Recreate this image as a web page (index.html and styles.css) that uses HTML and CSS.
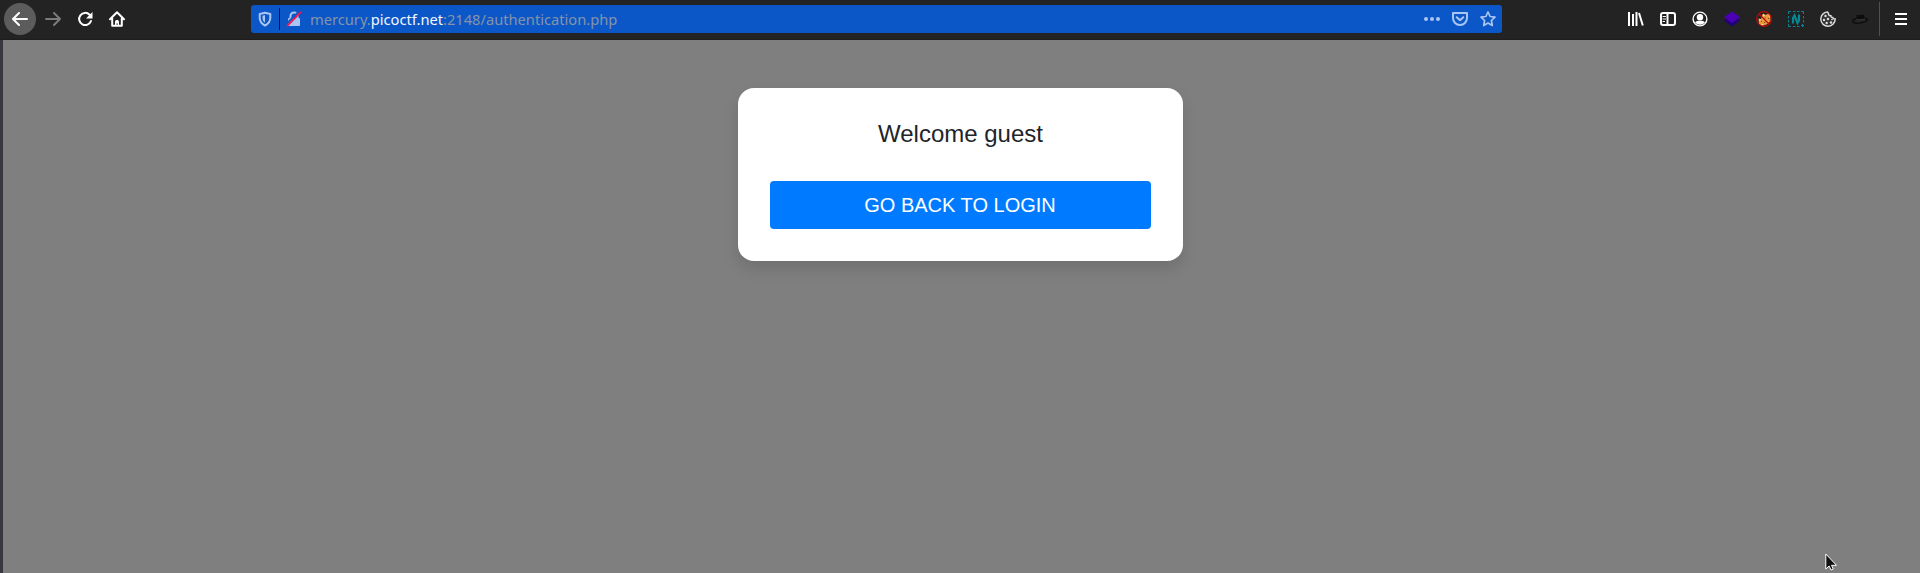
FILE: index.html
```html
<!DOCTYPE html>
<html lang="en">
<head>
<meta charset="utf-8">
<title>Login</title>
<link rel="stylesheet" href="styles.css">
</head>
<body>
<header class="toolbar">
  <nav class="nav">
    <span class="slot back"><svg width="16" height="16" viewBox="0 0 16 16" class="line"><path d="M15 8H1.500M7 2L1 8l6 6"/></svg></span>
    <span class="slot forward"><svg width="16" height="16" viewBox="0 0 16 16" class="line"><path d="M1 8h13.500M9 2l6 6-6 6"/></svg></span>
    <span class="slot"><svg width="16" height="16" viewBox="0 0 16 16" class="line"><path d="M12.600 3.700A6.100 6.100 0 1 0 14 10"/><path class="solid" d="M15.500 1v6.500H9z"/></svg></span>
    <span class="slot"><svg width="16" height="16" viewBox="0 0 16 16" class="line"><path d="M1 8.200L8 1.300l7 6.900M3.200 7v7.800h9.600V7"/><path class="solid" d="M6 15V10.500L7 9h2l1 1.500V15H8.700v-2.500H7.500V15z"/></svg></span>
  </nav>
  <div class="urlbar">
    <span class="shield"><svg width="14" height="16" viewBox="0 0 14 16" class="line"><path d="M7 1.700L1.700 3v4c0 3.400 2 5.700 5.300 7.600 3.300-1.900 5.300-4.200 5.300-7.600V3z"/><path class="solid" d="M7 4L4.500 4.700V7c0 2.200.8 3.500 2.500 4.800z"/></svg></span>
    <span class="divider"></span>
    <svg class="lock" width="16" height="16" viewBox="0 0 16 16"><path class="shackle" d="M4.500 8V5a3.500 3.500 0 0 1 7 0v3"/><rect class="solid" x="2" y="7" width="12" height="8" rx="1"/><path class="gap" d="M.5 13L13 .5"/><path class="slash" d="M1.500 14.600L14.500 1.400"/></svg>
    <span class="url">mercury.<b>picoctf.net</b>:2148/authentication.php</span>
    <span class="actions">
      <svg width="16" height="16" viewBox="0 0 16 16"><g class="solid"><circle cx="2" cy="8" r="2"/><circle cx="8" cy="8" r="2"/><circle cx="14" cy="8" r="2"/></g></svg>
      <svg width="16" height="16" viewBox="0 0 16 16" class="line"><path d="M1 2h14v5a7 7 0 0 1-14 0zM4.700 6.200L8 9.300l3.300-3.100"/></svg>
      <svg width="16" height="16" viewBox="0 0 16 16" class="line star"><path d="M8 1l2.100 4.500 4.900.6-3.600 3.400.9 5L8 12.100l-4.300 2.400.9-5L1 6.100l4.900-.6z"/></svg>
    </span>
  </div>
  <div class="tools">
    <span class="slot"><svg width="16" height="16" viewBox="0 0 16 16" class="line books"><path d="M1 1v14M5 3v12M8.500 1v14M11 2l3.800 12.500"/></svg></span>
    <span class="slot"><svg width="16" height="16" viewBox="0 0 16 16" class="line"><rect x="1" y="2" width="14" height="12" rx="2"/><path d="M7.500 2v12"/><path class="thin" d="M3 5.500h2.500M3 8h2.500M3 10.500h1.500"/></svg></span>
    <span class="slot"><svg width="16" height="16" viewBox="0 0 16 16"><circle class="ring" cx="8" cy="8" r="6.900"/><circle class="solid" cx="8" cy="6.200" r="3.200"/><path class="solid" d="M3 11.200c1-.9 2-1.200 3-1.400h4c1 .2 2 .5 3 1.400-1.200 1.700-3 2.500-5 2.500s-3.800-.8-5-2.500z"/></svg></span>
    <span class="slot"><svg width="16" height="16" viewBox="0 0 16 16"><path fill="#22007c" d="M0 9.500l8-5 8 5-8 6z"/><path fill="#4b00b5" d="M0 6l8-5.500L16 6l-8 6z"/></svg></span>
    <span class="slot"><svg width="16" height="16" viewBox="0 0 16 16"><path fill="#e99a3a" d="M6.500 3L9 4l4-1.500L14.800 5l-.5 5-2.800 3-5 2L3 13.500 2.500 7.500 5 8z"/><path fill="#f4eadc" d="M7 2.500L9 4 7.500 6zM13.500 3l1 2-1.500 1zM3 8l2 .5L3.500 10zM5 13h2l-.5 1.500z"/><path fill="#7b451c" d="M8.500 6.500h1.200v1H8.500zM12 7h1.200v1H12zM5 10h1v1H5zM8 11h1.200v1H8z"/><circle cx="8" cy="8" r="7.300" fill="none" stroke="#bd0a0a" stroke-width="1.200"/><path stroke="#bd0a0a" stroke-width="1.200" d="M3 3l10 10"/></svg></span>
    <span class="slot"><svg width="16" height="16" viewBox="0 0 16 16" fill="none" stroke="#068594"><path d="M.5 3V.5H3M5 .5h2.500M9 .5h2.500M13 .5h2.500V3M15.500 5v2.500M15.500 9v2.500M.5 5v2.500M.5 9v2.500M.5 13v2.500H3M5 15.500h2.500M9 15.500h2.500M13 14.500h3M14.500 13v3"/><path stroke-width="2.200" d="M5 12.500V7L6.500 4.500l3 7.500L11 9.500V3.500"/></svg></span>
    <span class="slot"><svg width="16" height="16" viewBox="0 0 16 16"><path fill="#333" stroke="#ddd" stroke-width="1.400" d="M7.500.9A7.200 7.200 0 1 0 15.200 8c-1.300.3-2.200-.4-2.400-1.500-1.400.2-2.100-.8-1.900-1.800C9 4.900 8.200 3.500 8.500 2.200 8 2 7.600 1.500 7.500.9z"/><g fill="#ddd"><circle cx="5.500" cy="5" r="1.200"/><circle cx="4" cy="9" r="1.200"/><circle cx="8" cy="8" r="1.200"/><circle cx="6.700" cy="12" r="1.200"/><circle cx="11" cy="11.500" r="1.200"/><circle cx="12" cy="8.500" r=".8"/></g></svg></span>
    <span class="slot"><svg width="16" height="16" viewBox="0 0 16 16"><path fill="#0c0c0c" d="M4.200 8.500l.5-4.800 3.200.5 4.200-.5.9 4z"/><path fill="none" stroke="#0c0c0c" stroke-width="1.300" d="M4 8C1.500 8.300.5 9.600.7 10.600c1 1.700 5.300 1.800 8.300 1.200 3.500-.6 6.500-2 6.400-3.600-.3-.8-1.400-.8-2.400-.5"/><path fill="none" stroke="#383838" d="M4.300 8.500c3 .8 6 .5 8.700-.7"/></svg></span>
    <span class="tools-divider"></span>
    <span class="slot menu"><svg width="12" height="12" viewBox="0 0 12 12" class="line"><path d="M0 1h12M0 6h12M0 11h12"/></svg></span>
  </div>
</header>
<main class="page">
  <section class="card">
    <h1 class="title">Welcome guest</h1>
    <button class="login" type="button">GO BACK TO LOGIN</button>
  </section>
</main>
<svg class="cursor" width="13" height="18" viewBox="0 0 13 18"><path d="M.8 1v15l3.300-3 2 4 2.200-1-1.800-3.700H11.500z"/></svg>
</body>
</html>
```
FILE: styles.css
```css
* { box-sizing: border-box; }
body {
  margin: 0;
  height: 573px;
  overflow: hidden;
  display: flex;
  flex-direction: column;
  background: #7f7f7f;
  font-family: "Liberation Sans", Arial, sans-serif;
}
svg { display: block; flex: none; }
.toolbar {
  height: 40px;
  flex: none;
  display: flex;
  align-items: flex-start;
  padding: 3px 3px 0 4px;
  background: #232323;
  border-bottom: 1px solid #1d1d1d;
  color: #fff;
}
.line { fill: none; stroke: currentColor; stroke-width: 2; stroke-linecap: round; stroke-linejoin: round; }
.books { stroke-linecap: butt; }
.solid { fill: currentColor; stroke: none; }
.ring { fill: none; stroke: currentColor; stroke-width: 1.4; }
.thin { stroke-width: 1; }
.nav { display: flex; width: 247px; }
.slot { width: 32px; height: 32px; flex: none; display: flex; align-items: center; justify-content: center; }
.back { border-radius: 50%; background: #5c5c5c; margin-right: 1px; }
.forward { color: #7b7b7b; }
.urlbar {
  width: 1251px;
  height: 28px;
  margin-top: 2px;
  display: flex;
  align-items: center;
  padding: 0 6px 0 7px;
  border-radius: 3px;
  background: #0c57c7;
  color: #a9c6f2;
}
.shield { width: 21px; }
.divider { width: 1px; height: 22px; background: #10131c; }
.lock { margin: 0 8px 0 6px; }
.shackle { fill: none; stroke: currentColor; stroke-width: 2; }
.gap { stroke: #0c57c7; stroke-width: 2; }
.slash { stroke: #f5144b; stroke-width: 1.8; stroke-linecap: round; }
.url { font: 14.667px/28px "Noto Sans", sans-serif; color: #8494a6; white-space: nowrap; }
.url b { font-weight: 400; color: #f4f8ff; }
.actions { display: flex; gap: 12px; margin-left: auto; }
.star { stroke-width: 1.7; }
.tools { display: flex; margin-left: auto; }
.tools-divider { width: 1px; height: 34px; margin: -1px 5px 0 3px; background: #505050; }
.page {
  flex: 1;
  padding: 48px 2px 0 0;
  border-left: 3px solid #37373f;
}
.card {
  width: 445px;
  height: 173px;
  margin: 0 auto;
  padding: 31px 32px 32px;
  border-radius: 16px;
  background: #fff;
  box-shadow: 0 8px 16px rgba(0, 0, 0, .12);
}
.title { margin: 0 0 33px; color: #212529; font-size: 24px; line-height: 29px; font-weight: 400; text-align: center; }
.login {
  width: 100%;
  height: 48px;
  padding: 0 1px 0 0;
  border: 0;
  border-radius: 4px;
  background: #007bff;
  color: #fff;
  font: 20px/30px "Liberation Sans", Arial, sans-serif;
}
.cursor { position: absolute; left: 1825px; top: 553px; fill: #111; stroke: #fff; stroke-width: 1; }
```
